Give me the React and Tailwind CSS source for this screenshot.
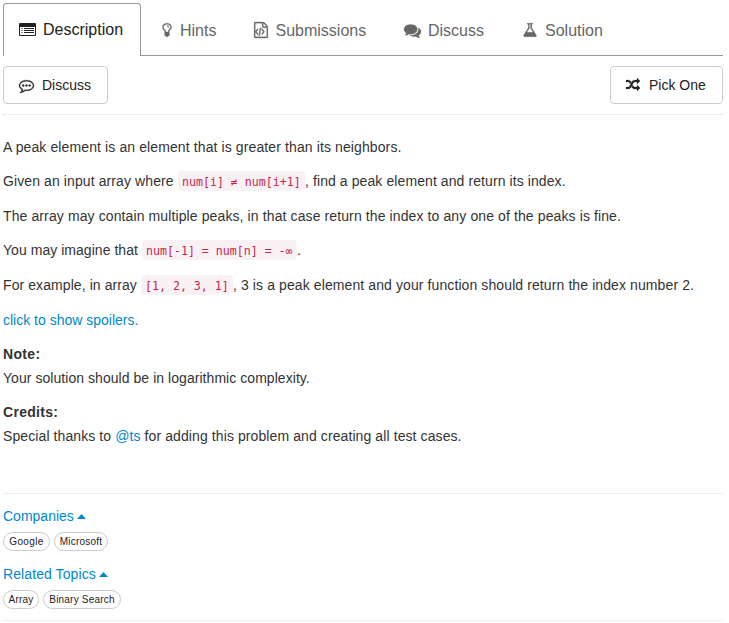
import React from "react";

const ICONS = {
  bulb: "M1120 576q0 13-9.500 22.500t-22.500 9.500-22.500-9.500-9.500-22.500q0-46-54-71t-106-25q-13 0-22.500-9.500t-9.500-22.500 9.500-22.500 22.500-9.500q50 0 99.500 16t87 54 37.500 90zm160 0q0-72-34.500-134t-90-101.500-123-62-136.500-22.500-136.500 22.500-123 62-90 101.500-34.500 134q0 101 68 180 10 11 30.500 33t30.500 33q128 153 141 298h228q13-145 141-298 10-11 30.500-33t30.500-33q68-79 68-180zm128 0q0 155-103 268-45 49-74.500 87t-59.500 95.500-34 107.500q47 28 47 82 0 37-25 64 25 27 25 64 0 52-45 81 13 23 13 47 0 46-31.500 71t-77.500 25q-20 44-60 70t-87 26-87-26-60-70q-46 0-77.500-25t-31.500-71q0-24 13-47-45-29-45-81 0-37 25-64-25-27-25-64 0-54 47-82-4-50-34-107.500t-59.500-95.500-74.500-87q-103-113-103-268 0-99 44.500-184.500t117-142 164-89 186.500-32.500 186.500 32.500 164 89 117 142 44.500 184.500z",
  file: "M1596 380q28 28 48 76t20 88v1152q0 40-28 68t-68 28h-1344q-40 0-68-28t-28-68v-1600q0-40 28-68t68-28h896q40 0 88 20t76 48zm-444-244v376h376q-10-29-22-41l-313-313q-12-12-41-22zm384 1528v-1024h-416q-40 0-68-28t-28-68v-416h-768v1536h1280zm-1056-896q8-11 21-12.500t24 6.500l51 38q11 8 12.500 21t-6.500 24l-182 243 182 243q8 11 6.500 24t-12.500 21l-51 38q-11 8-24 6.500t-21-12.500l-226-301q-14-19 0-38zm802 301q14 19 0 38l-226 301q-8 11-21 12.500t-24-6.500l-51-38q-11-8-12.500-21t6.500-24l182-243-182-243q-8-11-6.500-24t12.500-21l51-38q11-8 24-6.500t21 12.500zm-620 461q-13-2-20.500-13t-5.500-24l138-831q2-13 13-20.500t24-5.500l63 10q13 2 20.500 13t5.500 24l-138 831q-2 13-13 20.500t-24 5.500z",
  comments: "M1408 768q0 139-94 257t-256.500 186.500-353.500 68.500q-86 0-176-16-124 88-278 128-36 9-86 16h-3q-11 0-20.500-8t-11.500-21q-1-3-1-6.500t.5-6.500 2-6l2.500-5 3.500-5.500 4-5 4.500-5 4-4.500q5-6 23-25t26-29.500 22.500-29 25-38.500 20.500-44q-124-72-195-177t-71-224q0-139 94-257t256.500-186.500 353.500-68.500 353.500 68.500 256.500 186.500 94 257zm384 256q0 120-71 224.500t-195 176.500q10 24 20.500 44t25 38.500 22.500 29 26 29.500 23 25q1 1 4 4.500t4.500 5 4 5 3.500 5.500l2.500 5 2 6 .5 6.500-1 6.500q-3 14-13 22t-22 7q-50-7-86-16-154-40-278-128-90 16-176 16-271 0-472-132 58 4 88 4 161 0 309-45t264-129q125-92 192-212t67-254q0-77-23-152 129 71 204 178t75 230z",
  flask: "M1591 1448q56 89 21.500 152.500t-140.500 63.500h-1152q-106 0-140.500-63.500t21.500-152.500l503-793v-399h-64q-26 0-45-19t-19-45 19-45 45-19h512q26 0 45 19t19 45-19 45-45 19h-64v399zm-779-725l-272 429h712l-272-429-20-31v-436h-128v436z",
  random: "M666 481q-60 92-137 273-22-45-37-72.500t-40.500-63.500-51-56.500-63-35-81.500-14.500h-224q-14 0-23-9t-9-23v-192q0-14 9-23t23-9h224q250 0 410 225zm1126 799q0 14-9 23l-320 320q-9 9-23 9-13 0-22.500-9.500t-9.500-22.500v-192q-32 0-85 .5t-81 1-73-1-71-5-64-10.500-63-18.500-58-28.500-59-40-55-53.500-56-69.500q59-93 136-273 22 45 37 72.500t40.500 63.500 51 56.500 63 35 81.500 14.500h256v-192q0-14 9-23t23-9q12 0 24 10l319 319q9 9 9 23zm0-896q0 14-9 23l-320 320q-9 9-23 9-13 0-22.500-9.500t-9.500-22.500v-192h-256q-48 0-87 15t-69 45-51 61.500-45 77.500q-32 62-78 171-29 66-49.500 111t-54 105-64 100-74 83-90 68.500-106.500 42-128 16.500h-224q-14 0-23-9t-9-23v-192q0-14 9-23t23-9h224q48 0 87-15t69-45 51-61.500 45-77.500q32-62 78-171 29-66 49.500-111t54-105 64-100 74-83 90-68.500 106.500-42 128-16.500h256v-192q0-14 9-23t23-9q12 0 24 10l319 319q9 9 9 23z",
  commenting: "M640 896q0 53-37.500 90.500t-90.500 37.500-90.500-37.500-37.500-90.500 37.500-90.500 90.500-37.500 90.500 37.500 37.500 90.500zm384 0q0 53-37.500 90.500t-90.500 37.500-90.500-37.500-37.500-90.500 37.500-90.500 90.500-37.500 90.500 37.500 37.500 90.500zm384 0q0 53-37.500 90.500t-90.500 37.500-90.500-37.500-37.500-90.500 37.500-90.500 90.500-37.500 90.500 37.500 37.500 90.500zm-512-512q-204 0-381.500 69.500t-282 187.500-104.500 255q0 112 71.500 213.500t201.500 175.500l87 50-27 96q-24 91-70 172 152-63 275-171l43-38 57 6q69 8 130 8 204 0 381.500-69.500t282-187.500 104.500-255-104.500-255-282-187.500-381.500-69.500zm896 512q0 174-120 321.500t-326 233-450 85.500q-70 0-145-8-198 175-460 242-49 14-114 22h-5q-15 0-27-10.500t-16-27.500v-1q-3-4-.5-12t2-10 4.500-9.500l6-9 7-8.500 8-9q7-8 31-34.500t34.500-38 31-39.500 32.500-51 27-59 26-76q-157-89-247.500-220t-90.500-281q0-130 71-248.500t191-204.500 286-136.500 348-50.500 348 50.500 286 136.500 191 204.500 71 248.500z",
};

function Icon({ name, className }) {
  return (
    <svg viewBox="0 0 1792 1792" fill="currentColor" stroke="currentColor" strokeWidth="30" className={`block shrink-0 overflow-visible ${className}`}>
      <path d={ICONS[name]} />
    </svg>
  );
}

function ListIcon() {
  return (
    <svg viewBox="0 0 17 13" className="mb-px block h-[13px] w-[17px] shrink-0" fill="currentColor">
      <path fillRule="evenodd" d="M1 0h15a1 1 0 0 1 1 1v11a1 1 0 0 1-1 1H1a1 1 0 0 1-1-1V1a1 1 0 0 1 1-1zM1 4v8h15V4z" />
      <path d="M2.500 5h1v1h-1zM5 5h10v1H5zM2.500 7h1v1h-1zM5 7h10v1H5zM2.500 9h1v1h-1zM5 9h10v1H5z" />
    </svg>
  );
}

function Tab({ icon, size, label, className, text }) {
  return (
    <div className={`flex items-center text-[#666] ${className}`}>
      <Icon name={icon} className={`mb-px ${size}`} />
      <span className={text}>{label}</span>
    </div>
  );
}

function Code({ children, className }) {
  return (
    <code className={`flex h-5 items-center rounded bg-[#f9f2f4] pl-1 pt-[3px] font-['DejaVu_Sans_Mono',monospace] text-[11.6px] text-[#c7254e] ${className}`}>
      {children}
    </code>
  );
}

function Line({ children, className = "" }) {
  return <p className={`flex h-6 items-center whitespace-pre ${className}`}>{children}</p>;
}

function Tag({ children, className }) {
  return (
    <span className={`flex h-[19px] items-center justify-center rounded-full border border-[#ccc] text-[10px] text-[#222] ${className}`}>
      {children}
    </span>
  );
}

function Heading({ children }) {
  return (
    <div className="flex h-6 items-center text-[#0088cc]">
      <span>{children}</span>
      <svg viewBox="0 0 9 5" className="ml-[3px] mt-px block h-[5px] w-[9px]" fill="currentColor">
        <path d="M0 5 4.500 0 9 5z" />
      </svg>
    </div>
  );
}

export default function App() {
  return (
    <div className="h-[623px] w-[729px] overflow-hidden bg-white pl-[3px] pr-[6px] pt-[3px] font-['Liberation_Sans',Arial,sans-serif] text-[14px] text-[#333]">
      <nav className="flex h-[53px] text-[16px]">
        <div className="flex w-[138px] items-center rounded-t border border-b-0 border-[#999] pl-[15px] text-[#222]">
          <ListIcon />
          <span className="ml-[7px]">Description</span>
        </div>
        <div className="flex flex-1 border-b border-[#999] pt-[3px]">
          <Tab icon="bulb" size="size-4" label="Hints" className="ml-[18px] w-[94px]" text="ml-[5px]" />
          <Tab icon="file" size="size-4" label="Submissions" className="w-[151px]" text="ml-[6.500px]" />
          <Tab icon="comments" size="size-[17px]" label="Discuss" className="w-[118px]" text="ml-[7px]" />
          <Tab icon="flask" size="size-4" label="Solution" className="" text="ml-[7px]" />
        </div>
      </nav>

      <div className="mt-[10px] flex items-center justify-between text-[#222]">
        <button className="flex h-[38px] w-[105px] items-center rounded border border-[#ccc] pl-[15px]">
          <Icon name="commenting" className="size-[15px]" />
          <span className="ml-2">Discuss</span>
        </button>
        <button className="flex h-[38px] w-[113px] items-center rounded border border-[#ccc] pl-[15px]">
          <Icon name="random" className="size-[14px]" />
          <span className="ml-[9px]">Pick One</span>
        </button>
      </div>
      <div className="mt-[10px] border-t border-dotted border-[#ddd]" />

      <main className="pt-5">
        <Line className="tracking-[0.11px]">A peak element is an element that is greater than its neighbors.</Line>
        <Line className="mt-[10px]">
          <span className="w-[175px] tracking-[0.100px]">Given an input array where </span>
          <Code className="w-[127px]">num[i] ≠ num[i+1]</Code>
          <span className="tracking-[0.090px]">, find a peak element and return its index.</span>
        </Line>
        <Line className="mt-[11px] tracking-[0.110px]">The array may contain multiple peaks, in that case return the index to any one of the peaks is fine.</Line>
        <Line className="mt-[10px]">
          <span className="w-[139px] tracking-[0.040px]">You may imagine that </span>
          <Code className="w-[155px]">num[-1] = num[n] = -∞</Code>
          <span>.</span>
        </Line>
        <Line className="mt-[11px]">
          <span className="w-[138px] tracking-[0.080px]">For example, in array </span>
          <Code className="w-[92px]">[1, 2, 3, 1]</Code>
          <span className="tracking-[0.100px]">, 3 is a peak element and your function should return the index number 2.</span>
        </Line>
        <Line className="mt-[11px] text-[#0088cc]">click to show spoilers.</Line>
        <Line className="mt-[10px] font-bold tracking-[0.350px]">Note:</Line>
        <Line className="tracking-[0.050px]">Your solution should be in logarithmic complexity.</Line>
        <Line className="mt-[10px] font-bold tracking-[0.300px]">Credits:</Line>
        <Line className="tracking-[0.095px]">
          Special thanks to <a className="text-[#0088cc]">@ts</a> for adding this problem and creating all test cases.
        </Line>
      </main>

      <section className="mt-[45px] border-y border-[#eee] pt-[10px] pb-[11px]">
        <Heading>Companies</Heading>
        <div className="mt-1 flex gap-1">
          <Tag className="w-[47px] tracking-[0.350px]">Google</Tag>
          <Tag className="w-[54px] tracking-[0.200px]">Microsoft</Tag>
        </div>
        <div className="mt-[11px] tracking-[0.090px]">
          <Heading>Related Topics</Heading>
        </div>
        <div className="mt-1 flex gap-1 tracking-[0.2px]">
          <Tag className="w-[36px]">Array</Tag>
          <Tag className="w-[78px]">Binary Search</Tag>
        </div>
      </section>
    </div>
  );
}
